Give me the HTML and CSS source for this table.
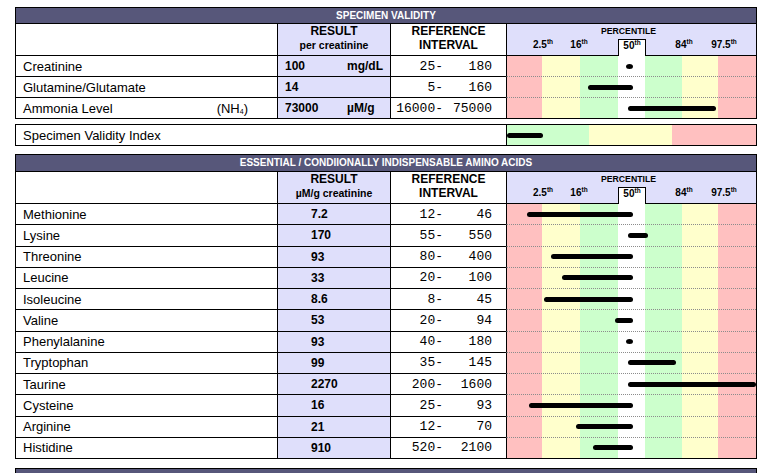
FILE: index.html
```html
<!DOCTYPE html>
<html>
<head>
<meta charset="utf-8">
<title>Specimen Validity</title>
<link rel="stylesheet" href="styles.css">
</head>
<body>
<section class="tbl t1">
  <div class="title">SPECIMEN VALIDITY</div>
  <div class="row head">
    <div class="c name"></div>
    <div class="c res"><div class="h1">RESULT</div><div class="h2">per creatinine</div></div>
    <div class="c ref"><div class="h1">REFERENCE</div><div class="h1">INTERVAL</div></div>
    <div class="c pct">
      <div class="pct-title">PERCENTILE</div>
      <span class="tick k1">2.5<sup>th</sup></span>
      <span class="tick k2">16<sup>th</sup></span>
      <div class="median">50<sup>th</sup></div>
      <span class="tick k4">84<sup>th</sup></span>
      <span class="tick k5">97.5<sup>th</sup></span>
    </div>
  </div>
  <div class="row data">
    <div class="c name">Creatinine</div>
    <div class="c res"><span class="val">100</span><span class="unit">mg/dL</span></div>
    <div class="c ref"><span>25-</span><span>180</span></div>
    <div class="c chart"><i class="bar dot" style="left:119px;width:7px"></i></div>
  </div>
  <div class="row data">
    <div class="c name">Glutamine/Glutamate</div>
    <div class="c res"><span class="val">14</span></div>
    <div class="c ref"><span>5-</span><span>160</span></div>
    <div class="c chart"><i class="bar" style="left:81px;width:45px"></i></div>
  </div>
  <div class="row data">
    <div class="c name split"><span>Ammonia Level</span><span>(NH<sub>4</sub>)</span></div>
    <div class="c res"><span class="val">73000</span><span class="unit">µM/g</span></div>
    <div class="c ref"><span>16000-</span><span>75000</span></div>
    <div class="c chart"><i class="bar" style="left:121px;width:88px"></i></div>
  </div>
</section>

<section class="svi">
  <div class="c name">Specimen Validity Index</div>
  <div class="c chart3"><i class="bar" style="left:0;width:36px"></i></div>
</section>

<section class="tbl t2">
  <div class="title">ESSENTIAL / CONDIIONALLY INDISPENSABLE AMINO ACIDS</div>
  <div class="row head">
    <div class="c name"></div>
    <div class="c res"><div class="h1">RESULT</div><div class="h2">µM/g creatinine</div></div>
    <div class="c ref"><div class="h1">REFERENCE</div><div class="h1">INTERVAL</div></div>
    <div class="c pct">
      <div class="pct-title">PERCENTILE</div>
      <span class="tick k1">2.5<sup>th</sup></span>
      <span class="tick k2">16<sup>th</sup></span>
      <div class="median">50<sup>th</sup></div>
      <span class="tick k4">84<sup>th</sup></span>
      <span class="tick k5">97.5<sup>th</sup></span>
    </div>
  </div>
  <div class="row data">
    <div class="c name">Methionine</div>
    <div class="c res"><span class="val">7.2</span></div>
    <div class="c ref"><span>12-</span><span>46</span></div>
    <div class="c chart"><i class="bar" style="left:20px;width:106px"></i></div>
  </div>
  <div class="row data">
    <div class="c name">Lysine</div>
    <div class="c res"><span class="val">170</span></div>
    <div class="c ref"><span>55-</span><span>550</span></div>
    <div class="c chart"><i class="bar" style="left:121px;width:20px"></i></div>
  </div>
  <div class="row data">
    <div class="c name">Threonine</div>
    <div class="c res"><span class="val">93</span></div>
    <div class="c ref"><span>80-</span><span>400</span></div>
    <div class="c chart"><i class="bar" style="left:44px;width:82px"></i></div>
  </div>
  <div class="row data">
    <div class="c name">Leucine</div>
    <div class="c res"><span class="val">33</span></div>
    <div class="c ref"><span>20-</span><span>100</span></div>
    <div class="c chart"><i class="bar" style="left:55px;width:71px"></i></div>
  </div>
  <div class="row data">
    <div class="c name">Isoleucine</div>
    <div class="c res"><span class="val">8.6</span></div>
    <div class="c ref"><span>8-</span><span>45</span></div>
    <div class="c chart"><i class="bar" style="left:37px;width:89px"></i></div>
  </div>
  <div class="row data">
    <div class="c name">Valine</div>
    <div class="c res"><span class="val">53</span></div>
    <div class="c ref"><span>20-</span><span>94</span></div>
    <div class="c chart"><i class="bar" style="left:108px;width:18px"></i></div>
  </div>
  <div class="row data">
    <div class="c name">Phenylalanine</div>
    <div class="c res"><span class="val">93</span></div>
    <div class="c ref"><span>40-</span><span>180</span></div>
    <div class="c chart"><i class="bar dot" style="left:119px;width:7px"></i></div>
  </div>
  <div class="row data">
    <div class="c name">Tryptophan</div>
    <div class="c res"><span class="val">99</span></div>
    <div class="c ref"><span>35-</span><span>145</span></div>
    <div class="c chart"><i class="bar" style="left:121px;width:48px"></i></div>
  </div>
  <div class="row data">
    <div class="c name">Taurine</div>
    <div class="c res"><span class="val">2270</span></div>
    <div class="c ref"><span>200-</span><span>1600</span></div>
    <div class="c chart"><i class="bar" style="left:121px;width:128px"></i></div>
  </div>
  <div class="row data">
    <div class="c name">Cysteine</div>
    <div class="c res"><span class="val">16</span></div>
    <div class="c ref"><span>25-</span><span>93</span></div>
    <div class="c chart"><i class="bar" style="left:22px;width:104px"></i></div>
  </div>
  <div class="row data">
    <div class="c name">Arginine</div>
    <div class="c res"><span class="val">21</span></div>
    <div class="c ref"><span>12-</span><span>70</span></div>
    <div class="c chart"><i class="bar" style="left:69px;width:57px"></i></div>
  </div>
  <div class="row data">
    <div class="c name">Histidine</div>
    <div class="c res"><span class="val">910</span></div>
    <div class="c ref"><span>520-</span><span>2100</span></div>
    <div class="c chart"><i class="bar" style="left:86px;width:40px"></i></div>
  </div>
</section>

<section class="tbl t3">
  <div class="title">&nbsp;</div>
</section>
</body>
</html>
```

FILE: styles.css
```css
* { box-sizing: border-box; }

html, body { background: #fff; }

body {
  margin: 0;
  padding: 7px 0 0 15px;
  font-family: "Liberation Sans", Arial, sans-serif;
  color: #000;
}

.tbl {
  width: 742px;
  border: 1px solid #000;
}

.title {
  height: 16px;
  line-height: 15px;
  border-bottom: 1px solid #000;
  background: #57577a;
  color: #fff;
  font-size: 10px;
  font-weight: bold;
  text-align: center;
  overflow: hidden;
}

.t2 .title { height: 17px; line-height: 16px; }

.svi { margin-top: 5px; }
.t2 { margin-top: 8px; }
.t3 { margin-top: 9px; }

.row {
  display: grid;
  grid-template-columns: 261px 113px 116px 250px;
}

.c { min-width: 0; }

.res, .ref, .chart, .pct, .chart3 { border-left: 1px solid #000; }

.res { background: #dfdffb; }

/* header row */
.head { height: 32px; }
.head > .c { border-bottom: 1px solid #000; }

.head .res, .head .ref { text-align: center; }

.h1 {
  font-size: 12px;
  font-weight: bold;
  line-height: 14px;
}

.h2 {
  font-size: 10.5px;
  font-weight: bold;
  line-height: 15px;
}

.pct {
  position: relative;
  background: #dfdffb;
}

.pct-title {
  position: absolute;
  top: 2px;
  left: 0;
  right: 6px;
  text-align: center;
  font-size: 8.7px;
  font-weight: bold;
  line-height: 10px;
}

.tick, .median {
  font-size: 10px;
  font-weight: bold;
  line-height: 11px;
  white-space: nowrap;
}

.tick {
  position: absolute;
  top: 15px;
  transform: translateX(-50%);
}

sup {
  font-size: 6.5px;
  line-height: 0;
  vertical-align: 4px;
}

.k1 { left: 36px; }
.k2 { left: 72px; }
.k4 { left: 177px; }
.k5 { left: 217px; }

.median {
  position: absolute;
  left: 111px;
  top: 15px;
  bottom: -1px;
  width: 28px;
  border: 1px solid #000;
  border-bottom: 0;
  background: #fff;
  text-align: center;
  padding-top: 0;
  margin: 0;
}

/* data rows */
.data { height: 20px; }
.data + .data { height: 21px; }
.t2 .data { height: 20.25px; }
.t2 .data + .data { height: 21.25px; }

.data + .data > .c { border-top: 1px solid #000; }
.data + .data > .chart { border-top: 1px dotted #8c8c8c; }

.name {
  display: flex;
  align-items: center;
  padding-left: 7px;
  font-size: 13px;
  white-space: nowrap;
}

.split {
  justify-content: space-between;
  padding-right: 29px;
}

sub {
  font-size: 7px;
  line-height: 0;
  vertical-align: -1px;
}

.data .res {
  display: flex;
  align-items: center;
  padding-left: 7px;
  font-size: 12px;
  font-weight: bold;
}

.t2 .data .res { padding-left: 33px; }

.val { width: 62px; }

.data .ref {
  display: grid;
  grid-template-columns: 52px 49px;
  align-items: center;
  font-family: "Liberation Mono", "Courier New", monospace;
  font-size: 13px;
  white-space: pre;
}

.data .ref span { text-align: right; }

.chart {
  position: relative;
  background: linear-gradient(to right,
    #ffc0c0 0 35px,
    #ffffcc 35px 73px,
    #ccffcc 73px 111px,
    #ffffff 111px 138px,
    #ccffcc 138px 175px,
    #ffffcc 175px 211px,
    #ffc0c0 211px);
}

.bar {
  position: absolute;
  top: 50%;
  height: 5px;
  margin-top: -2.5px;
  background: #000;
  border-radius: 3px;
}

.dot { border-radius: 50%; }

/* specimen validity index */
.svi {
  width: 742px;
  height: 22px;
  border: 1px solid #000;
  display: grid;
  grid-template-columns: 490px 250px;
}

.chart3 {
  position: relative;
  background: linear-gradient(to right,
    #ccffcc 0 82px,
    #ffffcc 82px 165px,
    #ffc0c0 165px);
}

.t3 { height: 12px; }
```
